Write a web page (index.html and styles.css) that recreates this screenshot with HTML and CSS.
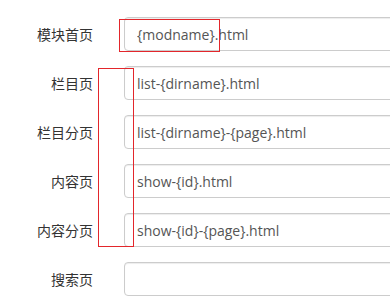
FILE: index.html
```html
<!DOCTYPE html>
<html lang="zh-CN">
<head>
    <meta charset="UTF-8">
    <meta name="viewport" content="width=device-width, initial-scale=1.0">
    <title>URL规则</title>
    <link rel="stylesheet" href="styles.css">
</head>
<body>

    <form class="rule-form">
        <div class="form-row">
            <label for="modIndex">模块首页</label>
            <input type="text" id="modIndex" value="{modname}.html">
        </div>
        <div class="form-row">
            <label for="listPage">栏目页</label>
            <input type="text" id="listPage" value="list-{dirname}.html">
        </div>
        <div class="form-row">
            <label for="listPaging">栏目分页</label>
            <input type="text" id="listPaging" value="list-{dirname}-{page}.html">
        </div>
        <div class="form-row">
            <label for="showPage">内容页</label>
            <input type="text" id="showPage" value="show-{id}.html">
        </div>
        <div class="form-row">
            <label for="showPaging">内容分页</label>
            <input type="text" id="showPaging" value="show-{id}-{page}.html">
        </div>
        <div class="form-row">
            <label for="searchPage">搜索页</label>
            <input type="text" id="searchPage" value="">
        </div>

        <!-- annotation boxes -->
        <div class="mark mark-name"></div>
        <div class="mark mark-labels"></div>
    </form>

</body>
</html>
```

FILE: styles.css
```css
body {
    margin: 0;
    padding: 0;
    background-color: #fff;
    font-family: "Open Sans", "Noto Sans CJK SC", sans-serif;
    font-size: 14px;
    color: #333;
    overflow: hidden;
}

.rule-form {
    position: relative;
    display: flex;
    flex-direction: column;
    gap: 15px;
    padding-top: 17px;
}

.form-row {
    display: grid;
    grid-template-columns: 93px 300px;
    column-gap: 31px;
    align-items: center;
}

.form-row label {
    text-align: right;
    font-family: "Noto Sans CJK SC", sans-serif;
    font-size: 14px;
    color: #333;
}

.form-row input {
    box-sizing: border-box;
    height: 34px;
    padding: 0 12px;
    border: 1px solid #ccc;
    border-radius: 4px;
    box-shadow: inset 0 1px 1px rgba(0, 0, 0, 0.075);
    font-family: "Open Sans", sans-serif;
    font-size: 14px;
    color: #555;
    background-color: #fff;
    outline: none;
}

.mark {
    position: absolute;
    border: 1px solid #e3262b;
    box-sizing: border-box;
}

.mark-name {
    left: 119px;
    top: 19px;
    width: 101px;
    height: 33px;
}

.mark-labels {
    left: 98px;
    top: 68px;
    width: 36px;
    height: 179px;
}
```
